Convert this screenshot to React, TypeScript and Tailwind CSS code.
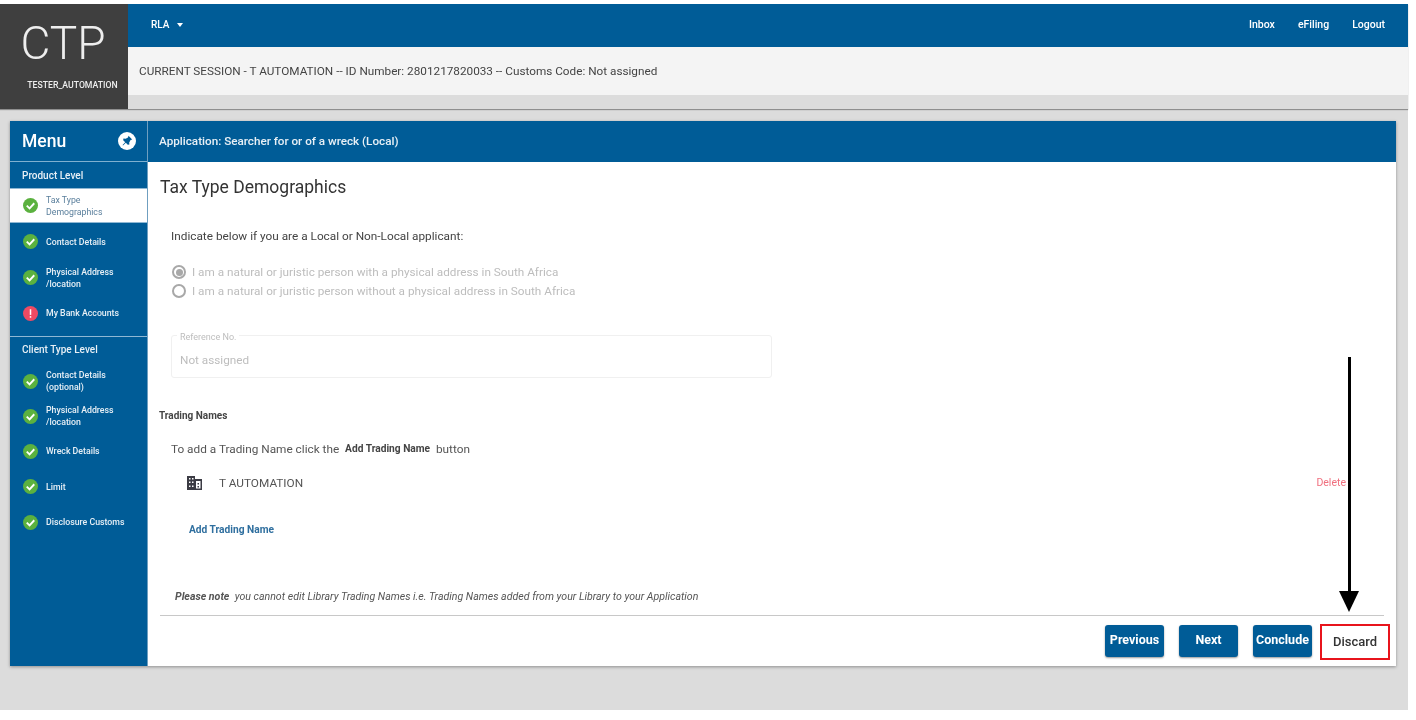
const CheckIcon = () => (
  <svg width="15" height="15" viewBox="0 0 16 16" className="shrink-0">
    <circle cx="8" cy="8" r="8" fill="#5bb13f" />
    <path d="M4 8.2 L7 11 L12 5.6" fill="none" stroke="#ffffff" strokeWidth="2" />
  </svg>
);

const AlertIcon = () => (
  <svg width="15" height="15" viewBox="0 0 16 16" className="shrink-0">
    <circle cx="8" cy="8" r="8" fill="#ef4a63" />
    <rect x="7.2" y="3.5" width="1.6" height="6" fill="#ffffff" />
    <rect x="7.2" y="10.8" width="1.6" height="1.7" fill="#ffffff" />
  </svg>
);

const PinIcon = () => (
  <svg width="18" height="18" viewBox="0 0 18 18">
    <circle cx="9" cy="9" r="9" fill="#ffffff" />
    <path d="M10.5 3.8 L14.2 7.5 L12.6 8 L11.2 10.4 L11.4 12.6 L9.8 12.8 L7.8 10.8 L5 13.4 L4.6 13 L7.2 10.2 L5.2 8.2 L5.4 6.6 L7.6 6.8 L10 5.4 Z" fill="#005c97" />
  </svg>
);

const BuildingIcon = () => (
  <svg width="16" height="14" viewBox="0 0 16 14" className="shrink-0">
    <path d="M0 0 H8 V3 H15 V14 H0 Z" fill="#3b3b44" />
    <g fill="#ffffff">
      <rect x="2" y="2" width="1.5" height="1.5" />
      <rect x="5" y="2" width="1.5" height="1.5" />
      <rect x="2" y="5.5" width="1.5" height="1.5" />
      <rect x="5" y="5.5" width="1.5" height="1.5" />
      <rect x="2" y="9.5" width="1.5" height="1.5" />
      <rect x="5" y="9.5" width="1.5" height="1.5" />
      <rect x="9" y="5" width="4.5" height="7.5" />
    </g>
    <rect x="10.5" y="7" width="1.5" height="1.5" fill="#3b3b44" />
    <rect x="10.5" y="10" width="1.5" height="1.5" fill="#3b3b44" />
  </svg>
);

interface MenuItemType {
  label: string[];
  height: string;
  alert?: boolean;
}

const MenuItem = ({ label, height, alert }: MenuItemType) => (
  <div className={`flex items-center gap-[8px] pl-[13px] ${height}`}>
    {alert ? <AlertIcon /> : <CheckIcon />}
    <div className="text-[8.75px] leading-[12px] font-medium text-[#e8f0f6]">
      {label.map((line) => (
        <div key={line}>{line}</div>
      ))}
    </div>
  </div>
);

const NavButton = ({ label }: { label: string }) => (
  <button className="w-[59px] h-[32px] rounded-[3px] bg-[#005c97] text-white text-[12.5px] font-bold shadow-[0_1px_2px_rgba(0,0,0,0.4)]">
    {label}
  </button>
);

const App = () => {
  return (
    <div className="relative w-[1416px] h-[720px] bg-white overflow-hidden font-['Roboto',sans-serif] blur-[0.4px]">
      <div className="mt-[4px] w-[1408px] h-[706px] bg-[#dcdcdc] flex flex-col">
        <div className="flex h-[105px] shrink-0 shadow-[0_1px_1px_rgba(0,0,0,0.35)]">
          <div className="w-[128px] bg-[#3f3f3f] flex flex-col items-center text-[#eeeeee] shrink-0">
            <div className="text-[46px] leading-[46px] font-light mt-[16px] -ml-[2px]">CTP</div>
            <div className="text-[8.7px] leading-[12px] mt-[13px] ml-[17px] font-medium whitespace-nowrap">TESTER_AUTOMATION</div>
          </div>
          <div className="flex-1 flex flex-col">
            <div className="h-[43px] bg-[#005c97] flex items-center justify-between pl-[23px] pr-[23px] pb-[2px] text-white text-[10px] font-medium">
              <div className="flex items-center gap-[8px]">
                <span>RLA</span>
                <span className="w-0 h-0 border-x-[3.5px] border-x-transparent border-t-[4px] border-t-white" />
              </div>
              <div className="flex gap-[23px] text-[10.5px]">
                <span>Inbox</span>
                <span>eFiling</span>
                <span>Logout</span>
              </div>
            </div>
            <div className="h-[48px] bg-[#f4f4f4] flex items-center pl-[11px] pt-[1px] text-[11.75px] text-[#444444]">
              CURRENT SESSION - T AUTOMATION -- ID Number: 2801217820033 -- Customs Code: Not assigned
            </div>
            <div className="flex-1 bg-[#dcdcdc]" />
          </div>
        </div>

        <div className="mt-[12px] ml-[10px] w-[1386px] h-[545px] flex shadow-[0_1px_3px_rgba(0,0,0,0.35)]">
          <div className="w-[138px] bg-[#005c97] text-white shrink-0 border-r border-[#6f9fc0]">
            <div className="h-[41px] flex items-center justify-between pl-[12px] pr-[11px] border-b border-[#7fb0d0]">
              <span className="text-[17.5px] font-medium">Menu</span>
              <PinIcon />
            </div>
            <div className="h-[26px] flex items-center pl-[12px] text-[10px] font-medium text-[#e8f0f6]">Product Level</div>
            <div className="h-[35px] bg-white flex items-center gap-[8px] pl-[13px] border-y border-[#8fb8d4]">
              <CheckIcon />
              <div className="text-[8.75px] leading-[12px] text-[#5a7f9c] pt-[1px]">
                <div>Tax Type</div>
                <div>Demographics</div>
              </div>
            </div>
            <MenuItem label={["Contact Details"]} height="h-[37px]" />
            <MenuItem label={["Physical Address", "/location"]} height="h-[35px]" />
            <MenuItem label={["My Bank Accounts"]} height="h-[36px]" alert />
            <div className="h-px bg-[#8fb8d4] mt-[5px]" />
            <div className="h-[26px] flex items-center pl-[12px] pb-[2px] text-[10px] font-medium text-[#e8f0f6]">Client Type Level</div>
            <MenuItem label={["Contact Details", "(optional)"]} height="h-[36px]" />
            <MenuItem label={["Physical Address", "/location"]} height="h-[34px]" />
            <MenuItem label={["Wreck Details"]} height="h-[36px]" />
            <MenuItem label={["Limit"]} height="h-[35px]" />
            <MenuItem label={["Disclosure Customs"]} height="h-[36px]" />
          </div>

          <div className="flex-1 flex flex-col bg-white">
            <div className="h-[41px] bg-[#005c97] flex items-center pl-[11px] pt-[1px] text-[11.7px] text-[#e8f0f6] font-medium">
              Application: Searcher for or of a wreck (Local)
            </div>
            <div className="flex-1 flex flex-col pl-[12px] pr-[12px]">
              <div className="mt-[13px] text-[17.5px] leading-[24px] text-[#333333]">Tax Type Demographics</div>
              <div className="mt-[29px] ml-[11px] text-[11.8px] leading-[16px] text-[#444444]">
                Indicate below if you are a Local or Non-Local applicant:
              </div>
              <div className="mt-[21px] ml-[12px] flex flex-col gap-[5px] text-[11.75px] leading-[14px] text-[#bdbdbd]">
                <div className="flex items-center gap-[6px]">
                  <span className="w-[14px] h-[14px] rounded-full border-2 border-[#a8a8a8] flex items-center justify-center">
                    <span className="w-[7px] h-[7px] rounded-full bg-[#a8a8a8]" />
                  </span>
                  I am a natural or juristic person with a physical address in South Africa
                </div>
                <div className="flex items-center gap-[6px]">
                  <span className="w-[14px] h-[14px] rounded-full border-2 border-[#a8a8a8]" />
                  I am a natural or juristic person without a physical address in South Africa
                </div>
              </div>
              <div className="relative mt-[37px] ml-[11px] w-[601px] h-[43px] border border-[#f0f0f0] rounded-[3px] flex items-center pl-[8px] pt-[9px] text-[11.75px] text-[#bdbdbd]">
                <span className="absolute -top-[3px] left-[5px] bg-white px-[3px] text-[9px] leading-[9px] text-[#bdbdbd]">Reference No.</span>
                Not assigned
              </div>
              <div className="mt-[31px] -ml-[1px] text-[10px] leading-[14px] font-bold text-[#444444]">Trading Names</div>
              <div className="mt-[18px] ml-[11px] flex items-center text-[11.8px] leading-[16px] text-[#555555] whitespace-pre">
                To add a Trading Name click the  <span className="text-[10.2px] font-bold text-[#444444]">Add Trading Name</span>  button
              </div>
              <div className="mt-[18px] flex items-center justify-between pr-[38px]">
                <div className="ml-[27px] flex items-center gap-[16px] text-[11.8px] leading-[14px] text-[#555555]">
                  <BuildingIcon />
                  T AUTOMATION
                </div>
                <span className="text-[10.5px] text-[#f0707f]">Delete</span>
              </div>
              <div className="mt-[32px] ml-[29px] text-[10.2px] leading-[14px] font-bold text-[#2f6f9f]">Add Trading Name</div>
              <div className="mt-[53px] ml-[15px] text-[10.6px] leading-[14px] italic text-[#555555] whitespace-pre">
                <span className="font-bold">Please note</span>  you cannot edit Library Trading Names i.e. Trading Names added from your Library to your Application
              </div>
              <div className="mt-[11px] h-px bg-[#c8c8c8]" />
              <div className="mt-[8px] flex justify-end items-center -mr-[6px]">
                <div className="flex gap-[15px] mr-[8px] mb-[2px]">
                  <NavButton label="Previous" />
                  <NavButton label="Next" />
                  <NavButton label="Conclude" />
                </div>
                <button className="w-[70px] h-[36px] border-2 border-[#e8141c] bg-white text-[13px] font-medium text-[#333333]">
                  Discard
                </button>
              </div>
            </div>
          </div>
        </div>
      </div>

      <div className="absolute left-[1339px] top-[357px] flex flex-col items-center w-[20px]">
        <div className="w-[3px] h-[234px] bg-black" />
        <div className="w-0 h-0 border-x-[10px] border-x-transparent border-t-[21px] border-t-black" />
      </div>
    </div>
  );
};

export default App;
